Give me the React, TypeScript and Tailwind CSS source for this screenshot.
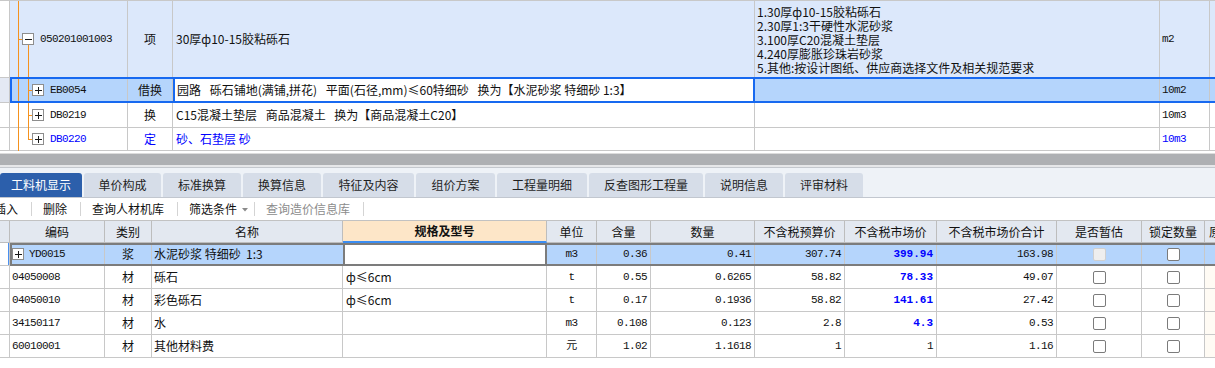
import React from "react";

const mono =
  "font-['Liberation_Mono','Noto_Sans_CJK_SC',monospace] text-[11px] tracking-[-0.6px]";
const line = "border-r border-[#c8c8c8]";
const TOP = "grid grid-cols-[10px_118px_45px_582px_405px_50px_5px]";
const BOTTOM =
  "grid grid-cols-[10px_95px_47px_191px_204px_50px_54px_104px_90px_92px_120px_85px_63px_10px]";

function TreeBox({ open }: { open?: boolean }) {
  return (
    <svg width="12" height="12" viewBox="0 0 12 12" shapeRendering="crispEdges" className="block shrink-0">
      <rect x="0.5" y="0.5" width="11" height="11" fill="#fff" stroke="#8d8d8d" />
      <path d="M3 6.5h7" stroke="#1a1a1a" />
      {!open && <path d="M6.5 3v7" stroke="#1a1a1a" />}
    </svg>
  );
}

function Check({ disabled }: { disabled?: boolean }) {
  return (
    <div
      className={
        disabled
          ? "w-[13px] h-[13px] rounded-[2px] border border-[#cfcfcf] bg-[#eeeeee]"
          : "w-[13px] h-[13px] rounded-[2px] border border-[#7b7b7b] bg-white"
      }
    />
  );
}

type SubRow = { code: string; kind: string; name: string; unit: string; blue?: boolean; last?: boolean; selected?: boolean };

// en space + plain space, the old grid font leaves wide gaps between words
const gap = "\u2002 ";

const subRows: SubRow[] = [
  {
    code: "EB0054",
    kind: "借换",
    name: `园路${gap}砾石铺地(满铺,拼花)${gap}平面(石径,mm)≤60特细砂${gap}换为【水泥砂浆 特细砂 1:3】`,
    unit: "10m2",
    selected: true,
  },
  {
    code: "DB0219",
    kind: "换",
    name: `C15混凝土垫层${gap}商品混凝土${gap}换为【商品混凝土C20】`,
    unit: "10m3",
  },
  { code: "DB0220", kind: "定", name: "砂、石垫层 砂", unit: "10m3", blue: true, last: true },
];

function TopGrid() {
  return (
    <div className="border-t border-[#c8c8c8]">
      <div className={`${TOP} h-[77px] border-b border-[#c8c8c8]`}>
        <div className={`${line} bg-white`} />
        <div className={`${line} relative flex items-center pl-[30px] bg-[#dce8fb]`}>
          <span className="absolute left-[8px] top-0 bottom-0 w-px bg-[#f5921e]" />
          <span className="absolute left-[8px] top-[38px] w-[4px] h-px bg-[#f5921e]" />
          <span className="absolute left-[18px] top-[44px] bottom-0 w-px bg-[#f5921e]" />
          <span className="absolute left-[12px] top-[32px]">
            <TreeBox open />
          </span>
          <span className={mono}>050201001003</span>
        </div>
        <div className={`${line} flex items-center justify-center bg-[#dce8fb]`}>项</div>
        <div className={`${line} flex items-center pl-[3px] bg-[#dce8fb]`}>30厚ф10-15胶粘砾石</div>
        <div className={`${line} pl-[2px] pt-[4px] leading-[14px] bg-[#dce8fb]`}>
          <div className="h-[14px]">1.30厚ф10-15胶粘砾石</div>
          <div className="h-[14px]">2.30厚1:3干硬性水泥砂浆</div>
          <div className="h-[14px]">3.100厚C20混凝土垫层</div>
          <div className="h-[14px]">4.240厚膨胀珍珠岩砂浆</div>
          <div className="h-[14px]">5.其他:按设计图纸、供应商选择文件及相关规范要求</div>
        </div>
        <div className={`${line} ${mono} flex items-center pl-[2px] bg-[#dce8fb]`}>m2</div>
        <div className="bg-[#dce8fb]" />
      </div>

      {subRows.map((r) => {
        const sel = r.selected;
        const bg = sel ? "bg-[#b5d5fc]" : "bg-white";
        const color = r.blue ? "text-[#0000ff]" : "text-[#111]";
        return (
          <div
            key={r.code}
            className={`${TOP} relative border-b border-[#c8c8c8] ${r.last ? "h-[23px]" : "h-[25px]"} ${color}`}
          >
            <div className={`${line} ${sel ? "bg-[#e4e9f4]" : "bg-white"}`} />
            <div className={`${line} ${bg} relative flex items-center pl-[40px]`}>
              <span className="absolute left-[8px] top-0 bottom-[-1px] w-px bg-[#f5921e]" />
              <span
                className={
                  r.last
                    ? "absolute left-[18px] top-0 h-[11px] w-px bg-[#f5921e]"
                    : "absolute left-[18px] top-0 bottom-[-1px] w-px bg-[#f5921e]"
                }
              />
              <span
                className={
                  r.last
                    ? "absolute left-[18px] top-[11px] w-[4px] h-px bg-[#f5921e]"
                    : "absolute left-[18px] top-[12px] w-[4px] h-px bg-[#f5921e]"
                }
              />
              <span className={r.last ? "absolute left-[22px] top-[5px]" : "absolute left-[22px] top-[6px]"}>
                <TreeBox />
              </span>
              <span className={mono}>{r.code}</span>
            </div>
            <div className={`${line} ${bg} flex items-center justify-center`}>{r.kind}</div>
            <div
              className={
                sel
                  ? "flex items-center pl-[2px] bg-white border-x-2 border-[#1769f0] whitespace-pre overflow-hidden"
                  : `${line} flex items-center pl-[3px] whitespace-pre overflow-hidden`
              }
            >
              {r.name}
            </div>
            <div className={`${line} ${bg}`} />
            <div className={`${line} ${bg} ${mono} flex items-center pl-[2px]`}>{r.unit}</div>
            <div className={bg} />
            {sel && (
              <div className="absolute left-[10px] right-[-2px] top-[-1px] bottom-[-1px] border-2 border-[#1769f0] pointer-events-none" />
            )}
          </div>
        );
      })}
    </div>
  );
}

const tabs = [
  { label: "工料机显示", w: "w-[82px]", active: true },
  { label: "单价构成", w: "w-[77px]" },
  { label: "标准换算", w: "w-[78px]" },
  { label: "换算信息", w: "w-[78px]" },
  { label: "特征及内容", w: "w-[91px]" },
  { label: "组价方案", w: "w-[79px]" },
  { label: "工程量明细", w: "w-[90px]" },
  { label: "反查图形工程量", w: "w-[114px]" },
  { label: "说明信息", w: "w-[78px]" },
  { label: "评审材料", w: "w-[78px]" },
];

function Tabs() {
  return (
    <div className="h-[30px] pt-[5px] flex items-end gap-[2px] bg-[#eef2f7] border-b border-[#c2c7cf]">
      {tabs.map((t) => (
        <div
          key={t.label}
          className={`${t.w} h-[24px] shrink-0 flex items-center justify-center rounded-t-[3px] ${
            t.active ? "bg-[#2c5fab] text-white" : "bg-[#d6dde8] text-[#1f1f1f]"
          }`}
        >
          {t.label}
        </div>
      ))}
    </div>
  );
}

function Sep() {
  return <span className="w-px h-[14px] bg-[#d4d4d4] shrink-0" />;
}

function Toolbar() {
  return (
    <div className="h-[22px] flex items-center whitespace-nowrap text-[#111]">
      <span className="ml-[-6px]">插入</span>
      <span className="ml-[13px] flex"><Sep /></span>
      <span className="ml-[11px]">删除</span>
      <span className="ml-[13px] flex"><Sep /></span>
      <span className="ml-[11px]">查询人材机库</span>
      <span className="ml-[13px] flex"><Sep /></span>
      <span className="ml-[11px]">筛选条件</span>
      <svg width="6" height="4" viewBox="0 0 6 4" className="ml-[5px] mt-[2px]">
        <path d="M0 0h6L3 3.5z" fill="#8a8a8a" />
      </svg>
      <span className="ml-[6px] flex"><Sep /></span>
      <span className="ml-[11px] text-[#8c8c8c]">查询造价信息库</span>
      <span className="ml-[13px] flex"><Sep /></span>
    </div>
  );
}

const headers = [
  "",
  "编码",
  "类别",
  "名称",
  "规格及型号",
  "单位",
  "含量",
  "数量",
  "不含税预算价",
  "不含税市场价",
  "不含税市场价合计",
  "是否暂估",
  "锁定数量",
  "原始含量",
];

type Item = {
  code: string;
  kind: string;
  name: string;
  spec: string;
  unit: string;
  content: string;
  qty: string;
  budget: string;
  market: string;
  marketBlue: boolean;
  total: string;
  selected?: boolean;
};

const items: Item[] = [
  { code: "YD0015", kind: "浆", name: "水泥砂浆 特细砂  1:3", spec: "", unit: "m3", content: "0.36", qty: "0.41", budget: "307.74", market: "399.94", marketBlue: true, total: "163.98", selected: true },
  { code: "04050008", kind: "材", name: "砾石", spec: "ф≤6cm", unit: "t", content: "0.55", qty: "0.6265", budget: "58.82", market: "78.33", marketBlue: true, total: "49.07" },
  { code: "04050010", kind: "材", name: "彩色砾石", spec: "ф≤6cm", unit: "t", content: "0.17", qty: "0.1936", budget: "58.82", market: "141.61", marketBlue: true, total: "27.42" },
  { code: "34150117", kind: "材", name: "水", spec: "", unit: "m3", content: "0.108", qty: "0.123", budget: "2.8", market: "4.3", marketBlue: true, total: "0.53" },
  { code: "60010001", kind: "材", name: "其他材料费", spec: "", unit: "元", content: "1.02", qty: "1.1618", budget: "1", market: "1", marketBlue: false, total: "1.16" },
];

function ResourceTable() {
  return (
    <div>
      <div className={`${BOTTOM} h-[23px] border-t border-[#c2c2c2] bg-[#e3e8f0] text-[#111]`}>
        {headers.map((h, i) => (
          <div
            key={i}
            className={
              i === 4
                ? "flex items-center justify-center font-bold bg-[#fde6c8] border-r border-[#bdbdbd] border-b-2 border-b-[#3b8df2]"
                : i === 13
                  ? "flex items-center pl-[4px] whitespace-nowrap overflow-hidden border-b border-[#bdbdbd]"
                  : "flex items-center justify-center whitespace-nowrap border-r border-b border-[#bdbdbd]"
            }
          >
            {h}
          </div>
        ))}
      </div>

      {items.map((it) => {
        const sel = it.selected;
        const bg = sel ? "bg-[#b5d5fc]" : "bg-white";
        return (
          <div key={it.code} className={`${BOTTOM} relative h-[23px] border-b border-[#c8c8c8] text-[#111]`}>
            <div className={`${line} bg-white flex justify-end`}>
              {sel && <span className="w-px h-full bg-[#4a90f0]" />}
            </div>
            <div className={`${line} ${bg} flex items-center pl-[2px] gap-[5px]`}>
              {sel && <TreeBox />}
              <span className={mono}>{it.code}</span>
            </div>
            <div className={`${line} ${bg} flex items-center justify-center`}>{it.kind}</div>
            <div className={`${bg} flex items-center pl-[2px] whitespace-pre ${sel ? "" : line}`}>{it.name}</div>
            <div
              className={
                sel
                  ? "bg-white border-x-2 border-[#7c7c7c]"
                  : `${line} flex items-center pl-[3px]`
              }
            >
              {it.spec}
            </div>
            <div className={`${line} ${bg} ${mono} flex items-center justify-center`}>{it.unit}</div>
            <div className={`${line} ${bg} ${mono} flex items-center justify-end pr-[3px]`}>{it.content}</div>
            <div className={`${line} ${bg} ${mono} flex items-center justify-end pr-[3px]`}>{it.qty}</div>
            <div className={`${line} ${bg} ${mono} flex items-center justify-end pr-[3px]`}>{it.budget}</div>
            <div
              className={`${line} ${bg} ${mono} flex items-center justify-end pr-[3px] ${
                it.marketBlue ? "font-bold text-[#0000ff] tracking-[0px]" : ""
              }`}
            >
              {it.market}
            </div>
            <div className={`${line} ${bg} ${mono} flex items-center justify-end pr-[3px]`}>{it.total}</div>
            <div className={`${line} ${bg} flex items-center justify-center`}>
              <Check disabled={sel} />
            </div>
            <div className={`${line} ${bg} flex items-center justify-center`}>
              <Check />
            </div>
            <div className={sel ? bg : "bg-[#fffbf4]"} />
            {sel && (
              <div className="absolute left-[10px] right-[-2px] top-0 bottom-[-1px] border-2 border-[#7c7c7c] pointer-events-none" />
            )}
          </div>
        );
      })}
    </div>
  );
}

export default function App() {
  return (
    <div className="w-[1215px] h-[368px] overflow-hidden bg-white text-[12px] leading-none text-[#111] font-['Noto_Sans_CJK_SC',sans-serif]">
      <TopGrid />
      <div className="h-[2px] bg-white" />
      <div className="h-px bg-[#dcdcdc]" />
      <div className="h-[11px] bg-[#aeb0b3]" />
      <div className="h-[2px] bg-[#e6e7e9]" />
      <div className="h-px bg-[#c4c8ce]" />
      <Tabs />
      <Toolbar />
      <ResourceTable />
    </div>
  );
}
